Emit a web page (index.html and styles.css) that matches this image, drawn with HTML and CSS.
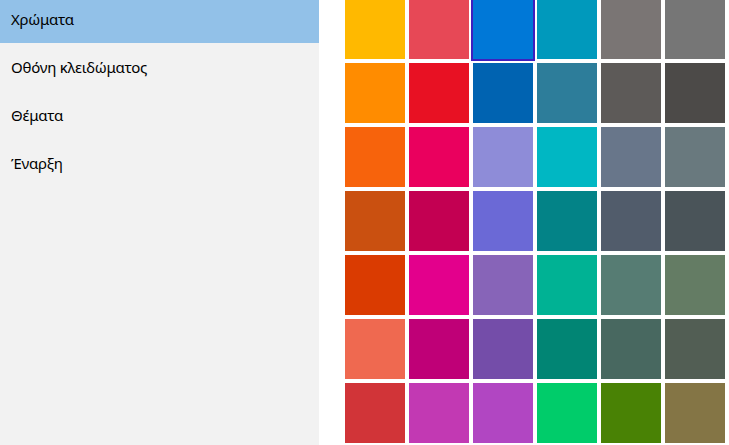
FILE: index.html
```html
<!DOCTYPE html>
<html lang="el">
<head>
<meta charset="utf-8">
<title>Χρώματα</title>
<link rel="stylesheet" href="styles.css">
</head>
<body>
<div class="app">
  <nav class="sidebar">
    <ul class="nav">
      <li class="nav-item active">Χρώματα</li>
      <li class="nav-item">Οθόνη κλειδώματος</li>
      <li class="nav-item">Θέματα</li>
      <li class="nav-item">Έναρξη</li>
    </ul>
  </nav>
  <main class="content">
    <div class="grid">
      <div class="sw" style="background:#FFB900"></div>
      <div class="sw" style="background:#E74856"></div>
      <div class="sw selected" style="background:#0078D7"></div>
      <div class="sw" style="background:#0099BC"></div>
      <div class="sw" style="background:#7A7574"></div>
      <div class="sw" style="background:#767676"></div>

      <div class="sw" style="background:#FF8C00"></div>
      <div class="sw" style="background:#E81123"></div>
      <div class="sw" style="background:#0063B1"></div>
      <div class="sw" style="background:#2D7D9A"></div>
      <div class="sw" style="background:#5D5A58"></div>
      <div class="sw" style="background:#4C4A48"></div>

      <div class="sw" style="background:#F7630C"></div>
      <div class="sw" style="background:#EA005E"></div>
      <div class="sw" style="background:#8E8CD8"></div>
      <div class="sw" style="background:#00B7C3"></div>
      <div class="sw" style="background:#68768A"></div>
      <div class="sw" style="background:#69797E"></div>

      <div class="sw" style="background:#CA5010"></div>
      <div class="sw" style="background:#C30052"></div>
      <div class="sw" style="background:#6B69D6"></div>
      <div class="sw" style="background:#038387"></div>
      <div class="sw" style="background:#515C6B"></div>
      <div class="sw" style="background:#4A5459"></div>

      <div class="sw" style="background:#DA3B01"></div>
      <div class="sw" style="background:#E3008C"></div>
      <div class="sw" style="background:#8764B8"></div>
      <div class="sw" style="background:#00B294"></div>
      <div class="sw" style="background:#567C73"></div>
      <div class="sw" style="background:#647C64"></div>

      <div class="sw" style="background:#EF6950"></div>
      <div class="sw" style="background:#BF0077"></div>
      <div class="sw" style="background:#744DA9"></div>
      <div class="sw" style="background:#018574"></div>
      <div class="sw" style="background:#486860"></div>
      <div class="sw" style="background:#525E54"></div>

      <div class="sw" style="background:#D13438"></div>
      <div class="sw" style="background:#C239B3"></div>
      <div class="sw" style="background:#B146C2"></div>
      <div class="sw" style="background:#00CC6A"></div>
      <div class="sw" style="background:#498205"></div>
      <div class="sw" style="background:#847545"></div>
    </div>
  </main>
</div>
</body>
</html>
```

FILE: styles.css
```css
* { box-sizing: border-box; }
html, body {
  margin: 0;
  padding: 0;
  width: 729px;
  height: 445px;
  overflow: hidden;
  background: #ffffff;
  font-family: "Noto Sans", "Open Sans", "DejaVu Sans", sans-serif;
  color: #000000;
}
.app {
  display: flex;
  height: 445px;
}
.sidebar {
  width: 319px;
  flex: 0 0 319px;
  background: #f2f2f2;
  height: 100%;
  overflow: hidden;
}
.nav {
  list-style: none;
  margin: -5px 0 0 0;
  padding: 0;
}
.nav-item {
  height: 48px;
  display: flex;
  align-items: center;
  padding: 0 0 0 11px;
  font-size: 15px;
  letter-spacing: -0.25px;
}
.nav-item.active {
  background: #92c1e8;
}
.content {
  flex: 1;
  padding: 0 0 0 26px;
}
.grid {
  display: grid;
  grid-template-columns: repeat(6, 60px);
  grid-auto-rows: 60px;
  gap: 4px;
  margin-top: -1px;
}
.sw {
  width: 60px;
  height: 60px;
}
.sw.selected {
  outline: 2px solid #3d1fbf;
}
```
